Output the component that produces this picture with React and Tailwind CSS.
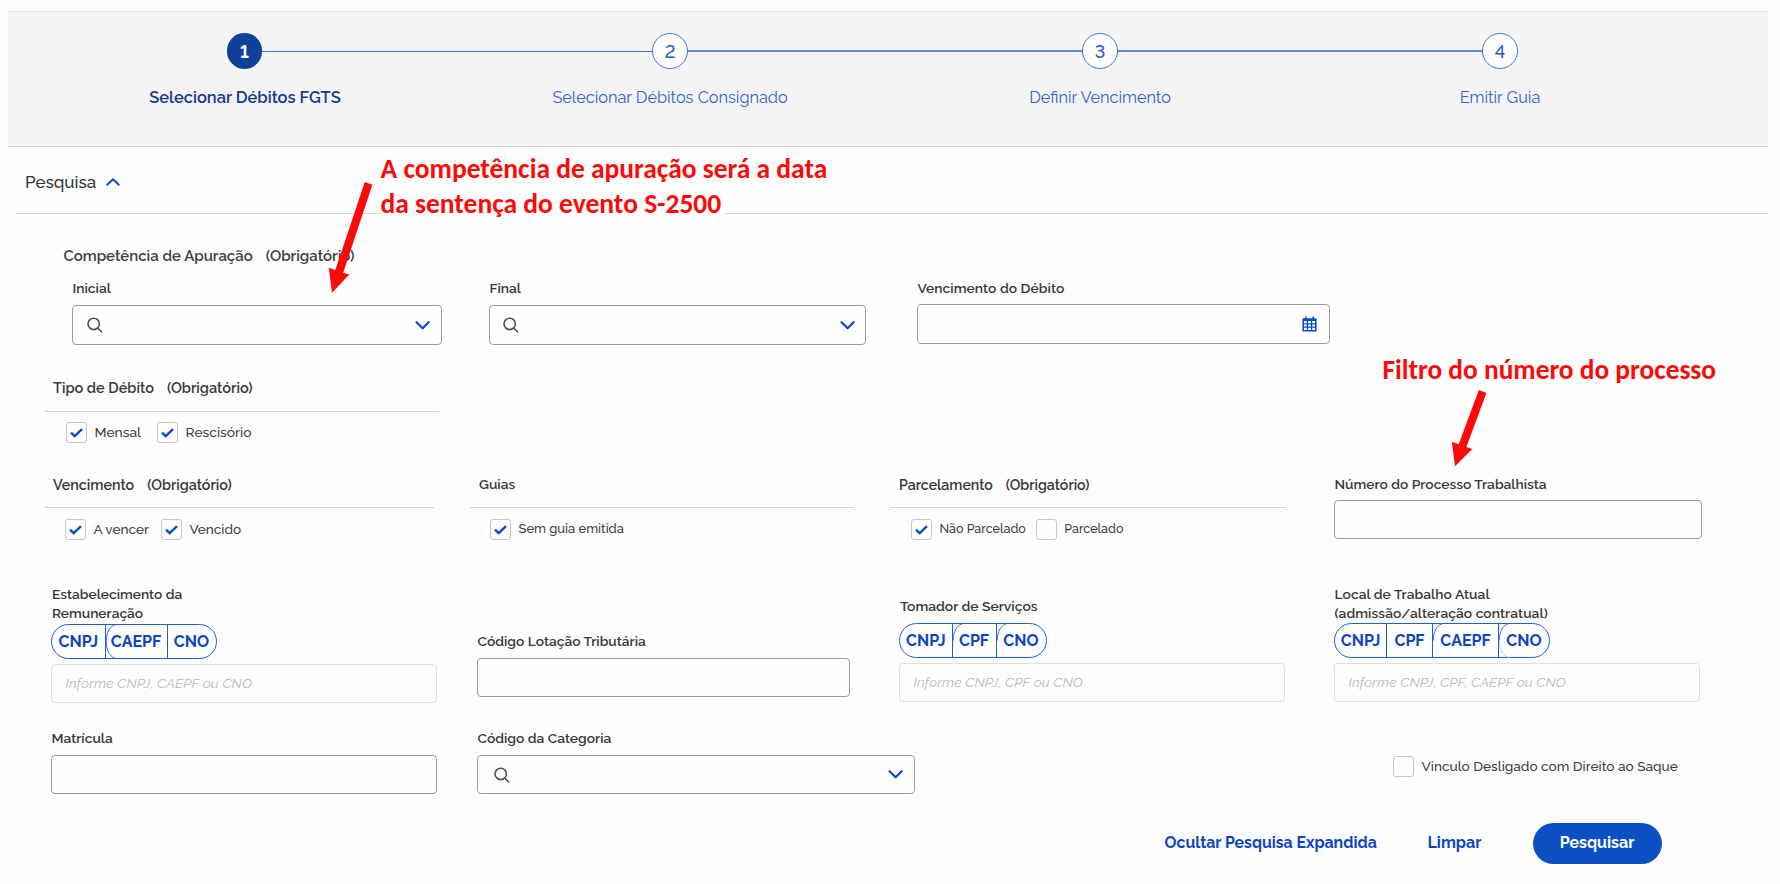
const SearchIcon = () => (
  <svg className="h-4 w-4 shrink-0" viewBox="0 0 16 16" fill="none" stroke="#4f4f4f" strokeWidth="1.6" strokeLinecap="round">
    <circle cx="6.7" cy="6.9" r="5.7" />
    <path d="M10.9 11.2 L14.7 15" />
  </svg>
);

const ChevronDown = () => (
  <svg className="h-[9px] w-[15px] shrink-0" viewBox="0 0 15 9" fill="none" stroke="#0c4cc6" strokeWidth="2.3" strokeLinecap="round" strokeLinejoin="round">
    <path d="M1.6 1.3 L7.6 7.2 L13.6 1.3" />
  </svg>
);

const ChevronUp = () => (
  <svg className="h-2 w-[14px] shrink-0" viewBox="0 0 14 8" fill="none" stroke="#0c4cc6" strokeWidth="1.9" strokeLinecap="round" strokeLinejoin="round">
    <path d="M1.2 6.8 L7 1.2 L12.8 6.8" />
  </svg>
);

const CalendarIcon = () => (
  <svg className="h-4 w-[15px] shrink-0" viewBox="0 0 15 16">
    <path fill="#0c4cc6" d="M3 0.6h1.6v1.7h5.8V0.6H12v1.7h1.6c.6 0 1 .4 1 1v11.1c0 .6-.4 1-1 1H1.4c-.6 0-1-.4-1-1V3.3c0-.6.4-1 1-1H3z" />
    <path fill="#fdfdfd" d="M2 5h2.8v2.3H2zM6.1 5h2.8v2.3H6.1zM10.2 5H13v2.3h-2.8zM2 8.4h2.8v2.2H2zM6.1 8.4h2.8v2.2H6.1zM10.2 8.4H13v2.2h-2.8zM2 11.7h2.8V14H2zM6.1 11.7h2.8V14H6.1zM10.2 11.7H13V14h-2.8z" />
  </svg>
);

const CheckMark = () => (
  <svg className="h-[10px] w-[13px]" viewBox="0 0 13 10" fill="none" stroke="#0c4cc6" strokeWidth="2.5">
    <path d="M1 4.6 L4.7 8.1 L12 1.2" />
  </svg>
);

const Check = ({ checked, className = "", text }) => (
  <label className={`flex items-start ${className}`}>
    <span className="mr-[7.5px] flex h-[21px] w-[21px] shrink-0 items-center justify-center rounded-[3px] border border-[#c6c6ca] bg-[#fefefe]">
      {checked && <CheckMark />}
    </span>
    <span className="whitespace-nowrap font-medium leading-5 text-[#404040]">{text}</span>
  </label>
);

const Label = ({ children, className = "text-[13.8px]" }) => (
  <div className={`h-5 whitespace-nowrap pl-[0.5px] font-semibold leading-5 text-[#383838] ${className}`}>{children}</div>
);

const Input = ({ className = "", children }) => (
  <div className={`flex items-center justify-between rounded-[4px] border border-[#9b9b9b] bg-[#fefefe] ${className}`}>{children}</div>
);

const MutedInput = ({ children, className = "" }) => (
  <div className={`mt-[5px] flex h-[39px] items-center rounded-[4px] border border-[#dfdfdf] pl-[13.5px] text-[13.8px] italic tracking-[0.12px] text-[#b9b9b9] ${className}`}>{children}</div>
);

const Group = ({ title, required, className = "", titleClass = "text-[14.15px]", children }) => (
  <div className={className}>
    <div className={`flex h-[34px] gap-[13px] border-b border-[#d3d3d3] pl-[9px] font-semibold leading-5 text-[#383838] ${titleClass}`}>
      <span>{title}</span>
      {required && <span>(Obrigatório)</span>}
    </div>
    {children}
  </div>
);

const Segment = ({ children, className, curve, first }) => (
  <div className={`relative flex items-center justify-center ${first ? "" : "border-l border-[#1f5fd0]"} ${className}`}>
    {curve && (
      <svg className="absolute -top-px left-0 h-[35px] w-[14px]" viewBox="0 0 14 35" fill="none">
        <path d="M10 .5 C4 2 .3 8 .3 17.5" stroke="#3a72d6" />
        {curve !== "top" && <path d="M.3 17.5 C.3 27 4 33 10 34.5" stroke={curve === "full" ? "#3a72d6" : "#bfd1f2"} />}
      </svg>
    )}
    <span>{children}</span>
  </div>
);

const Segments = ({ children }) => (
  <div className="flex h-[35px] w-fit rounded-[17.5px] border border-[#1f5fd0] text-[16px] font-bold text-[#0c46bd]">{children}</div>
);

const Step = ({ n, active, children }) => (
  <div className="flex w-9 shrink-0 flex-col items-center">
    <div
      className={
        active
          ? "mr-px flex h-9 w-[35px] items-center justify-center rounded-full bg-[#0f4199] text-[18px] font-bold text-white"
          : "flex h-9 w-9 items-center justify-center rounded-full border border-[#3f74d2] bg-[#fdfdfd] text-[18px] font-medium text-[#2459c4]"
      }
    >
      {n}
    </div>
    <div
      className={
        active
          ? "mt-[18.5px] whitespace-nowrap text-[16.45px] font-semibold leading-5 text-[#133a8f]"
          : "mt-[18.5px] whitespace-nowrap text-[16.3px] leading-5 text-[#3164c4]"
      }
    >
      {children}
    </div>
  </div>
);

export default function App() {
  return (
    <div className="relative flex h-[884px] w-[1780px] flex-col overflow-hidden bg-[#fdfdfd] pt-[11px] font-['Raleway','Lato',sans-serif] lining-nums">
      <header className="ml-2 flex h-[136px] w-[1760px] border-t border-b border-t-[#e6e6e6] border-b-[#d4d4d4] bg-[#f4f4f4] pl-[219px] pt-[21px]">
        <Step n="1" active>Selecionar Débitos FGTS</Step>
        <div className="-ml-px mt-[18px] h-px w-[390px] bg-[#3f74d0]" />
        <Step n="2">Selecionar Débitos Consignado</Step>
        <div className="mt-[17px] h-0.5 w-[394px] bg-[#5b8ad8]" />
        <Step n="3">Definir Vencimento</Step>
        <div className="mt-[17px] h-0.5 w-[364px] bg-[#5b8ad8]" />
        <Step n="4">Emitir Guia</Step>
      </header>

      <div className="ml-4 flex h-[67px] w-[1752px] items-center gap-2.5 border-b border-[#d8d8d8] pb-px pl-[9px] pt-1 text-[17px] font-medium text-[#363636]">
        <span className="leading-6">Pesquisa</span>
        <ChevronUp />
      </div>

      <div className="mt-8 flex h-5 gap-[13px] pl-[63.5px] text-[15px] font-semibold leading-5 text-[#404040]">
        <span>Competência de Apuração</span>
        <span>(Obrigatório)</span>
      </div>

      <div className="mt-3 flex h-[67px] pl-[72px]">
        <div className="w-[370px]">
          <Label>Inicial</Label>
          <Input className="mt-[7px] h-10 pl-[14px] pr-[11px]">
            <SearchIcon />
            <ChevronDown />
          </Input>
        </div>
        <div className="ml-[47px] w-[377px]">
          <Label>Final</Label>
          <Input className="mt-[7px] h-10 pl-[13px] pr-2.5">
            <SearchIcon />
            <ChevronDown />
          </Input>
        </div>
        <div className="ml-[51px] w-[413px]">
          <Label className="text-[13.8px] tracking-[0.06px]">Vencimento do Débito</Label>
          <Input className="mt-1.5 h-10 pl-[15px] pr-3">
            <span />
            <CalendarIcon />
          </Input>
        </div>
      </div>

      <div className="mt-[33px] flex h-[65px] pl-11">
        <Group title="Tipo de Débito" required className="w-[395px]" titleClass="text-[14.5px]">
          <div className="mt-2.5 flex gap-4 pl-[22px] text-[13.8px]">
            <Check checked text="Mensal" />
            <Check checked text="Rescisório" />
          </div>
        </Group>
      </div>

      <div className="mt-[31px] flex h-[66px] pl-11">
        <Group title="Vencimento" required className="w-[390px]" titleClass="pt-px text-[14.3px]">
          <div className="mt-[11px] flex gap-3 pl-[21px] text-[13.6px]">
            <Check checked text="A vencer" />
            <Check checked text="Vencido" />
          </div>
        </Group>
        <Group title="Guias" className="ml-9 w-[384px]" titleClass="text-[13.8px]">
          <div className="mt-[11px] flex pl-5 text-[12.95px]">
            <Check checked text="Sem guia emitida" />
          </div>
        </Group>
        <Group title="Parcelamento" required className="ml-9 w-[396px]" titleClass="pt-px text-[14.15px]">
          <div className="mt-[11px] flex gap-2.5 pl-[21px] text-[12.5px]">
            <Check checked text="Não Parcelado" />
            <Check text="Parcelado" />
          </div>
        </Group>
        <div className="ml-12 w-[368px]">
          <Label>Número do Processo Trabalhista</Label>
          <Input className="mt-1.5 h-[39px]" />
        </div>
      </div>

      <div className="mt-11 flex h-[119px] pl-[51px]">
        <div className="flex w-[386px] flex-col">
          <div className="h-10 pl-px pt-px text-[13.75px] font-semibold leading-[19px] text-[#383838]">
            Estabelecimento da
            <br />
            Remuneração
          </div>
          <Segments>
            <Segment first className="w-[52.5px]">CNPJ</Segment>
            <Segment curve="full" className="w-[62px]">CAEPF</Segment>
            <Segment className="w-[49px]">CNO</Segment>
          </Segments>
          <MutedInput>Informe CNPJ, CAEPF ou CNO</MutedInput>
        </div>
        <div className="ml-10 w-[373px] pt-[47px]">
          <Label>Código Lotação Tributária</Label>
          <Input className="mt-[7px] h-[39px]" />
        </div>
        <div className="ml-[49px] flex w-[386px] flex-col pt-3">
          <Label className="mb-[7px] pl-px text-[13.85px]">Tomador de Serviços</Label>
          <Segments>
            <Segment first className="w-[51.5px]">CNPJ</Segment>
            <Segment curve="top" className="w-11">CPF</Segment>
            <Segment curve="top" className="w-[50px]">CNO</Segment>
          </Segments>
          <MutedInput>Informe CNPJ, CPF ou CNO</MutedInput>
        </div>
        <div className="ml-[49px] flex w-[366px] flex-col">
          <div className="h-[39px] whitespace-nowrap pl-[0.5px] pt-px text-[13.8px] font-semibold leading-[19px] tracking-[0.05px] text-[#383838]">
            Local de Trabalho Atual
            <br />
            (admissão/alteração contratual)
          </div>
          <Segments>
            <Segment first className="w-[51px]">CNPJ</Segment>
            <Segment className="w-[46px]">CPF</Segment>
            <Segment curve="top" className="w-[66px]">CAEPF</Segment>
            <Segment curve="soft" className="w-[51px]">CNO</Segment>
          </Segments>
          <MutedInput>Informe CNPJ, CPF, CAEPF ou CNO</MutedInput>
        </div>
      </div>

      <div className="mt-[25px] flex h-[66px] pl-[51px]">
        <div className="w-[386px]">
          <Label>Matrícula</Label>
          <Input className="mt-[7px] h-[39px]" />
        </div>
        <div className="ml-10 w-[438px]">
          <Label>Código da Categoria</Label>
          <Input className="mt-[7px] h-[39px] pl-4 pr-[11px]">
            <SearchIcon />
            <ChevronDown />
          </Input>
        </div>
        <div className="ml-[478px] pt-7 text-[13.65px]">
          <Check text="Vinculo Desligado com Direito ao Saque" />
        </div>
      </div>

      <div className="mt-[29px] flex h-[41px] items-center pl-[1164.5px] text-[16px] font-bold text-[#0c46bd]">
        <button className="w-[213px] whitespace-nowrap pb-px text-left text-[15.85px]">Ocultar Pesquisa Expandida</button>
        <button className="ml-[50px] w-[56px] pb-px text-left">Limpar</button>
        <button className="ml-[49px] h-[41px] w-[129px] rounded-full bg-[#0b4fc3] pb-px text-white">Pesquisar</button>
      </div>

      <div className="absolute left-[380.5px] top-[152px] w-[344px] whitespace-nowrap bg-[#fdfdfd] font-['Carlito','Lato',sans-serif] text-[27.5px] font-bold leading-[34.5px] text-[#fb0a0a]">
        A competência de apuração será a data
        <br />
        da sentença do evento S-2500
      </div>
      <div className="absolute left-[1382.5px] top-[353px] whitespace-nowrap font-['Carlito','Lato',sans-serif] text-[27.4px] font-bold leading-[34px] text-[#fb0a0a]">
        Filtro do número do processo
      </div>
      <svg className="absolute left-[320px] top-[175px] h-[125px] w-[60px]" viewBox="320 175 60 125">
        <path fill="#fb0a0a" d="M364.8 182.1 L372.4 184.7 L343.2 272.7 L349.3 274.6 L332 292.8 L328.8 267.8 L335.3 270.1 Z" />
      </svg>
      <svg className="absolute left-[1445px] top-[385px] h-[90px] w-[50px]" viewBox="1445 385 50 90">
        <path fill="#fb0a0a" d="M1478.8 390.1 L1486.4 392.9 L1466.4 446.9 L1472.3 449 L1455 466.3 L1451.8 441.8 L1458.7 444.3 Z" />
      </svg>
    </div>
  );
}
